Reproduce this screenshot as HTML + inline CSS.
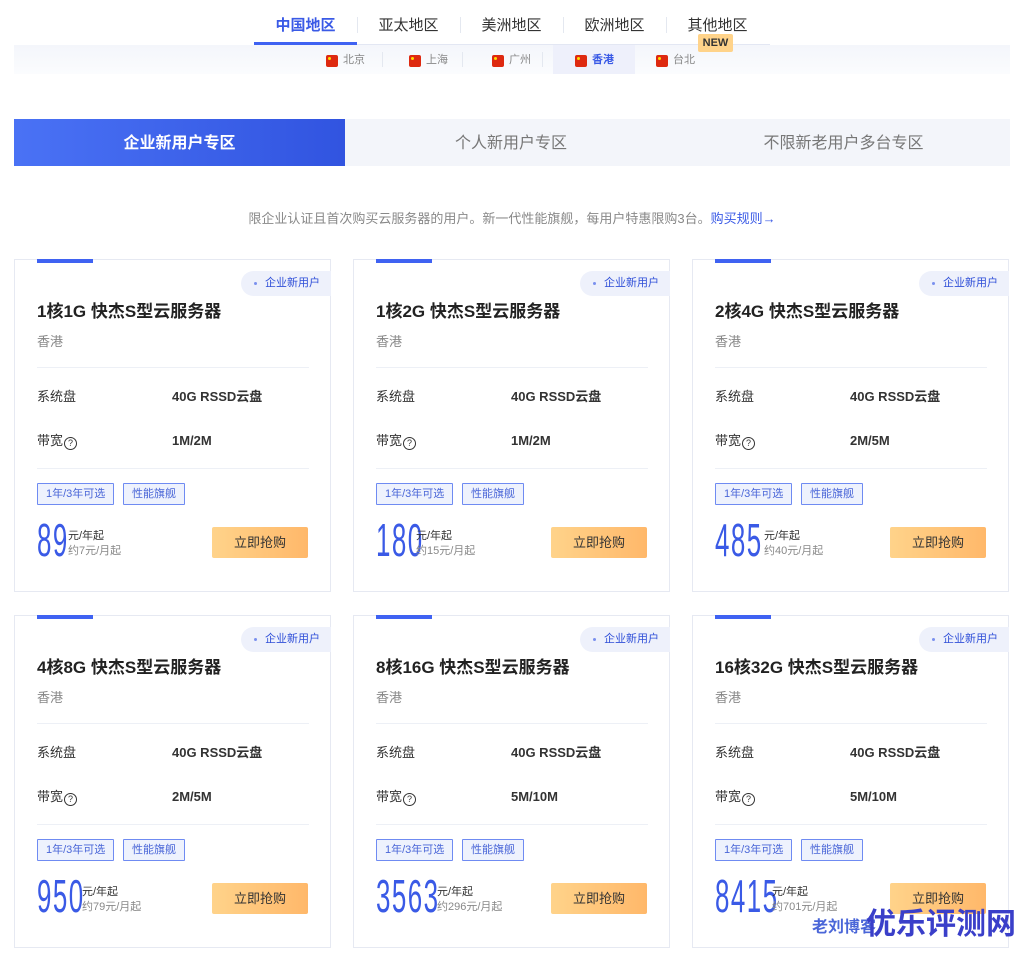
<!DOCTYPE html>
<html><head><meta charset="utf-8"><style>
*{margin:0;padding:0;box-sizing:border-box}
body{width:1024px;height:955px;background:#fff;font-family:"Liberation Sans","Noto Sans CJK SC",sans-serif;position:relative;overflow:hidden;color:#333}
.abs{position:absolute}
.reg{position:absolute;top:14px;font-size:15px;color:#333;width:103px;text-align:center}
.sep{position:absolute;top:17px;width:1px;height:16px;background:#e4e8f0}
.sub{position:absolute;top:0;height:29px;font-size:11px;color:#888;line-height:29px;display:flex;align-items:center}
.flag{display:inline-block;width:12px;height:12px;background:#de2910;border-radius:2px;margin-right:5px;position:relative}
.flag:after{content:"";position:absolute;left:2px;top:2px;width:3px;height:3px;background:#ffde00;border-radius:50%}
.card{position:absolute;width:317px;height:333px;border:1px solid #e6e9f2;background:#fff}
.card .bar{position:absolute;left:22px;top:-1px;width:56px;height:4px;background:#3f62f2}
.card .tag{position:absolute;right:-1px;top:11px;height:25px;width:90px;background:#eef1fb;border-radius:13px 0 0 13px;font-size:11px;color:#2f4fd8;line-height:25px;padding-left:24px}
.card .tag:before{content:"";position:absolute;left:13px;top:11px;width:3px;height:3px;border-radius:50%;background:#7a90ee}
.card h3{position:absolute;left:22px;top:37px;font-size:17px;font-weight:bold;color:#222}
.card .loc{position:absolute;left:22px;top:71px;font-size:13px;color:#888}
.card .hr{position:absolute;left:22px;width:272px;height:1px;background:#edf0f6}
.card .k{position:absolute;left:22px;font-size:13px;color:#333;line-height:16px}
.card .v{position:absolute;left:157px;font-size:13px;font-weight:bold;color:#333;line-height:16px}
.q{display:inline-block;width:13px;height:13px;border:1px solid #333;border-radius:50%;font-size:9px;line-height:11px;text-align:center;vertical-align:-1px;margin-left:1px}
.card .pill{position:absolute;top:223px;height:22px;border:1px solid #6f8bf2;background:#eef2fd;color:#4a66d8;font-size:11px;line-height:20px;padding:0 8px;border-radius:1px}
.card .price{position:absolute;left:22px;top:257px;font-family:"Liberation Sans",sans-serif;font-size:36px;color:#3a5ae6;transform:scale(0.72,1.3);transform-origin:left top;letter-spacing:2px;line-height:36px}
.card .unit{position:absolute;top:269px;font-size:11px;color:#333;line-height:15px}
.card .unit span{color:#888}
.card .btn{position:absolute;left:197px;top:267px;width:96px;height:31px;background:linear-gradient(90deg,#ffd38a,#ffb86a);border-radius:2px;font-size:13px;color:#333;text-align:center;line-height:31px}
</style></head><body>
<div class="abs" style="left:14px;top:45px;width:996px;height:29px;background:linear-gradient(#f4f6fb,#fbfcfe)"></div>
<div class="abs" style="left:254px;top:44px;width:516px;height:1px;background:#e3e7f3"></div>
<div class="abs" style="left:254px;top:42px;width:103px;height:3px;background:#3f62f2"></div>
<div class="reg" style="left:254px;color:#3a5ae6;font-weight:bold">中国地区</div>
<div class="sep" style="left:357px"></div>
<div class="reg" style="left:357px">亚太地区</div>
<div class="sep" style="left:460px"></div>
<div class="reg" style="left:460px">美洲地区</div>
<div class="sep" style="left:563px"></div>
<div class="reg" style="left:563px">欧洲地区</div>
<div class="sep" style="left:666px"></div>
<div class="reg" style="left:666px">其他地区</div>
<div class="abs" style="left:553px;top:45px;width:82px;height:29px;background:#eef0fb"></div>
<div class="abs" style="left:698px;top:34px;width:35px;height:18px;background:#ffd38a;border-radius:2px;font-size:11px;font-weight:bold;color:#333;text-align:center;line-height:18px">NEW</div>
<div class="abs" style="top:45px;left:0;width:1024px;height:29px">
<div class="sub" style="left:326px;top:1px"><i class="flag"></i>北京</div>
<div class="sep" style="left:382px;top:7px;height:15px"></div>
<div class="sub" style="left:409px;top:1px"><i class="flag"></i>上海</div>
<div class="sep" style="left:462px;top:7px;height:15px"></div>
<div class="sub" style="left:492px;top:1px"><i class="flag"></i>广州</div>
<div class="sep" style="left:542px;top:7px;height:15px"></div>
<div class="sub" style="left:575px;top:1px;color:#3a5ae6;font-weight:bold"><i class="flag"></i>香港</div>
<div class="sub" style="left:656px;top:1px"><i class="flag"></i>台北</div>
</div>
<div class="abs" style="left:14px;top:119px;width:996px;height:47px;background:#f3f5fa"></div>
<div class="abs" style="left:14px;top:119px;width:331px;height:47px;background:linear-gradient(90deg,#4a72f5,#3154e0);color:#fff;font-size:16px;font-weight:bold;text-align:center;line-height:49px">企业新用户专区</div>
<div class="abs" style="left:345px;top:119px;width:332px;height:47px;color:#777;font-size:16px;text-align:center;line-height:49px">个人新用户专区</div>
<div class="abs" style="left:677px;top:119px;width:333px;height:47px;color:#777;font-size:16px;text-align:center;line-height:49px">不限新老用户多台专区</div>
<div class="abs" style="left:0;top:208px;width:1024px;text-align:center;font-size:13px;color:#888">限企业认证且首次购买云服务器的用户。新一代性能旗舰，每用户特惠限购3台。<span style="color:#3a5ae6">购买规则→</span></div>

<div class="card" style="left:14px;top:259px"><div class="bar"></div><div class="tag">企业新用户</div><h3>1核1G 快杰S型云服务器</h3><div class="loc">香港</div><div class="hr" style="top:107px"></div><div class="k" style="top:129px">系统盘</div><div class="v" style="top:129px">40G RSSD云盘</div><div class="k" style="top:173px">带宽<span class="q">?</span></div><div class="v" style="top:173px">1M/2M</div><div class="hr" style="top:208px"></div><div class="pill" style="left:22px">1年/3年可选</div><div class="pill" style="left:108px">性能旗舰</div><div class="price">89</div><div class="unit" style="left:53px">元/年起<br><span>约7元/月起</span></div><div class="btn">立即抢购</div></div>
<div class="card" style="left:353px;top:259px"><div class="bar"></div><div class="tag">企业新用户</div><h3>1核2G 快杰S型云服务器</h3><div class="loc">香港</div><div class="hr" style="top:107px"></div><div class="k" style="top:129px">系统盘</div><div class="v" style="top:129px">40G RSSD云盘</div><div class="k" style="top:173px">带宽<span class="q">?</span></div><div class="v" style="top:173px">1M/2M</div><div class="hr" style="top:208px"></div><div class="pill" style="left:22px">1年/3年可选</div><div class="pill" style="left:108px">性能旗舰</div><div class="price">180</div><div class="unit" style="left:62px">元/年起<br><span>约15元/月起</span></div><div class="btn">立即抢购</div></div>
<div class="card" style="left:692px;top:259px"><div class="bar"></div><div class="tag">企业新用户</div><h3>2核4G 快杰S型云服务器</h3><div class="loc">香港</div><div class="hr" style="top:107px"></div><div class="k" style="top:129px">系统盘</div><div class="v" style="top:129px">40G RSSD云盘</div><div class="k" style="top:173px">带宽<span class="q">?</span></div><div class="v" style="top:173px">2M/5M</div><div class="hr" style="top:208px"></div><div class="pill" style="left:22px">1年/3年可选</div><div class="pill" style="left:108px">性能旗舰</div><div class="price">485</div><div class="unit" style="left:71px">元/年起<br><span>约40元/月起</span></div><div class="btn">立即抢购</div></div>
<div class="card" style="left:14px;top:615px"><div class="bar"></div><div class="tag">企业新用户</div><h3>4核8G 快杰S型云服务器</h3><div class="loc">香港</div><div class="hr" style="top:107px"></div><div class="k" style="top:129px">系统盘</div><div class="v" style="top:129px">40G RSSD云盘</div><div class="k" style="top:173px">带宽<span class="q">?</span></div><div class="v" style="top:173px">2M/5M</div><div class="hr" style="top:208px"></div><div class="pill" style="left:22px">1年/3年可选</div><div class="pill" style="left:108px">性能旗舰</div><div class="price">950</div><div class="unit" style="left:67px">元/年起<br><span>约79元/月起</span></div><div class="btn">立即抢购</div></div>
<div class="card" style="left:353px;top:615px"><div class="bar"></div><div class="tag">企业新用户</div><h3>8核16G 快杰S型云服务器</h3><div class="loc">香港</div><div class="hr" style="top:107px"></div><div class="k" style="top:129px">系统盘</div><div class="v" style="top:129px">40G RSSD云盘</div><div class="k" style="top:173px">带宽<span class="q">?</span></div><div class="v" style="top:173px">5M/10M</div><div class="hr" style="top:208px"></div><div class="pill" style="left:22px">1年/3年可选</div><div class="pill" style="left:108px">性能旗舰</div><div class="price">3563</div><div class="unit" style="left:83px">元/年起<br><span>约296元/月起</span></div><div class="btn">立即抢购</div></div>
<div class="card" style="left:692px;top:615px"><div class="bar"></div><div class="tag">企业新用户</div><h3>16核32G 快杰S型云服务器</h3><div class="loc">香港</div><div class="hr" style="top:107px"></div><div class="k" style="top:129px">系统盘</div><div class="v" style="top:129px">40G RSSD云盘</div><div class="k" style="top:173px">带宽<span class="q">?</span></div><div class="v" style="top:173px">5M/10M</div><div class="hr" style="top:208px"></div><div class="pill" style="left:22px">1年/3年可选</div><div class="pill" style="left:108px">性能旗舰</div><div class="price">8415</div><div class="unit" style="left:79px">元/年起<br><span>约701元/月起</span></div><div class="btn">立即抢购</div></div>
<div class="abs" style="left:812px;top:913px;font-size:16px;font-weight:bold;color:#4a66d8">老刘博客</div>
<div class="abs" style="left:866px;top:905px;font-size:30px;font-weight:bold;color:#3a3fc9;line-height:40px">优乐评测网</div>
</body></html>
